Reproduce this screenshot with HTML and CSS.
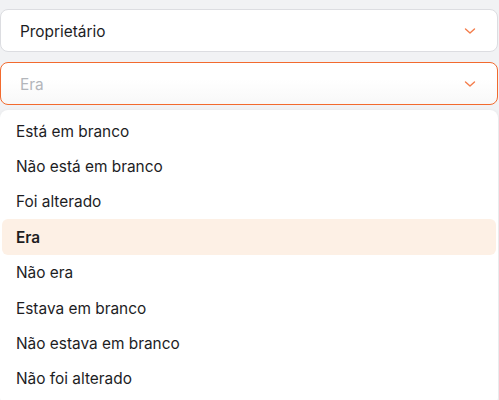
FILE: index.html
```html
<!DOCTYPE html>
<html lang="pt">
<head>
<meta charset="utf-8">
<link rel="stylesheet" href="styles.css">
</head>
<body>
<div class="wrap">
  <div class="select">
    <span class="value">Proprietário</span>
    <svg class="chev" width="12" height="8" viewBox="0 0 12 8"><path d="M1.5 2l4.5 4 4.5-4" fill="none" stroke="#f47c4a" stroke-width="1.4" stroke-linecap="round" stroke-linejoin="round"/></svg>
  </div>
  <div class="select active">
    <span class="placeholder">Era</span>
    <svg class="chev" width="12" height="8" viewBox="0 0 12 8"><path d="M1.5 2l4.5 4 4.5-4" fill="none" stroke="#f47c4a" stroke-width="1.4" stroke-linecap="round" stroke-linejoin="round"/></svg>
  </div>
  <ul class="menu">
    <li class="opt">Está em branco</li>
    <li class="opt">Não está em branco</li>
    <li class="opt">Foi alterado</li>
    <li class="opt selected">Era</li>
    <li class="opt">Não era</li>
    <li class="opt">Estava em branco</li>
    <li class="opt">Não estava em branco</li>
    <li class="opt">Não foi alterado</li>
  </ul>
</div>
</body>
</html>
```
FILE: styles.css
```css
html, body {
  margin: 0;
  padding: 0;
  background: #f1f2f4;
  font-family: Inter, "Noto Sans", sans-serif;
  font-size: 15.4px;
  color: #1d1d1f;
  overflow: hidden;
}
.wrap {
  padding: 9px 1px 0 0;
  display: flex;
  flex-direction: column;
}
.select {
  height: 43px;
  box-sizing: border-box;
  border: 1px solid #dcdde1;
  border-radius: 8px;
  background: #fff;
  display: flex;
  align-items: center;
  justify-content: space-between;
  padding: 1px 21px 0 19px;
  margin-bottom: 10px;
}
.select.active {
  border-color: #f26a2e;
  background: linear-gradient(#ffffff 40%, #f8f8f8);
  margin-bottom: 5px;
}
.value { color: #1d1d1f; }
.placeholder { color: #b3b6bb; }
.chev { display: block; }
.menu {
  list-style: none;
  margin: 0;
  padding: 3px 2px 10px 2px;
  background: #fff;
  border-radius: 8px;
  box-shadow: 0 1px 4px rgba(0,0,0,0.08);
}
.opt {
  height: 35.4px;
  box-sizing: border-box;
  display: flex;
  align-items: center;
  padding: 1px 0 0 14px;
  border-radius: 6px;
}
.opt.selected {
  background: #fdf0e5;
  font-weight: 600;
}
```
